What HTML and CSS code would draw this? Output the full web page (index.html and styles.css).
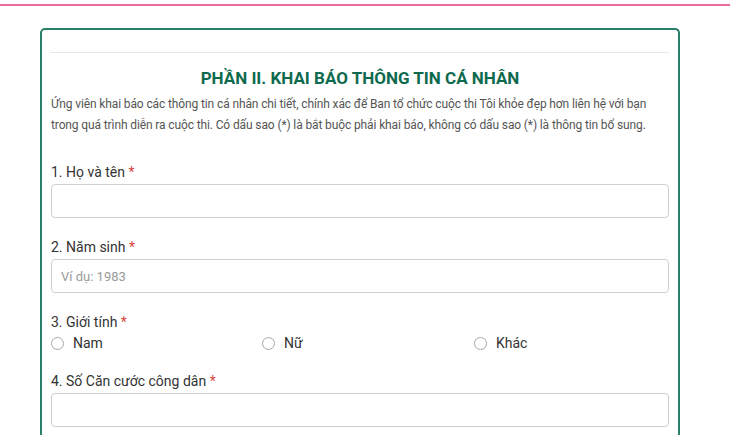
FILE: index.html
```html
<!DOCTYPE html>
<html lang="vi">
<head>
<meta charset="utf-8">
<title>Khai báo thông tin cá nhân</title>
<link rel="stylesheet" href="styles.css">
</head>
<body>
<div class="topline"></div>
<div class="card">
  <hr class="divider">
  <h2 class="title">PHẦN II. KHAI BÁO THÔNG TIN CÁ NHÂN</h2>
  <p class="desc">Ứng viên khai báo các thông tin cá nhân chi tiết, chính xác để Ban tổ chức cuộc thi Tôi khỏe đẹp hơn liên hệ với bạn trong quá trình diễn ra cuộc thi. Có dấu sao (*) là bắt buộc phải khai báo, không có dấu sao (*) là thông tin bổ sung.</p>

  <div class="field">
    <label class="label">1. Họ và tên <span class="req">*</span></label>
    <input class="input" type="text">
  </div>

  <div class="field">
    <label class="label">2. Năm sinh <span class="req">*</span></label>
    <input class="input" type="text" placeholder="Ví dụ: 1983">
  </div>

  <div class="field">
    <label class="label">3. Giới tính <span class="req">*</span></label>
    <div class="radios">
      <label class="radio"><input type="radio" name="gt"><span>Nam</span></label>
      <label class="radio"><input type="radio" name="gt"><span>Nữ</span></label>
      <label class="radio"><input type="radio" name="gt"><span>Khác</span></label>
    </div>
  </div>

  <div class="field">
    <label class="label">4. Số Căn cước công dân <span class="req">*</span></label>
    <input class="input" type="text">
  </div>
</div>
</body>
</html>
```
FILE: styles.css
```css
* { box-sizing: border-box; }
html, body { margin: 0; padding: 0; background: #fff; }
body { font-family: Roboto, "Noto Sans", Arial, sans-serif; color: #333; }

.topline {
  margin-top: 4px;
  height: 2px;
  background: #ec6b9d;
}

.card {
  width: 640px;
  margin: 22px 0 0 40px;
  border: 2px solid #2a7f68;
  border-bottom: none;
  border-radius: 5px 5px 0 0;
  padding: 22px 9px 0 9px;
  height: 420px;
}

.divider {
  margin: 0 0 0 -1px;
  border: 0;
  border-top: 1px solid #e7e7e7;
  height: 0;
}

.title {
  margin: 14px 0 5px;
  text-align: center;
  font-size: 17px;
  line-height: 22px;
  font-weight: 700;
  color: #0d6a4e;
}

.desc {
  margin: 0 0 26px;
  font-size: 12px;
  line-height: 21px;
  letter-spacing: -0.12px;
  color: #555;
}

.field { margin-bottom: 19px; }

.label {
  display: block;
  font-size: 14px;
  line-height: 20px;
  margin-bottom: 2px;
  color: #333;
}

.req { color: #d9463f; }

.input {
  display: block;
  width: 100%;
  height: 34px;
  border: 1px solid #cfcfcf;
  border-radius: 4px;
  padding: 0 9px;
  font-family: inherit;
  font-size: 13px;
  color: #333;
  background: #fff;
}
.input::placeholder { color: #9a9a9a; }

.radios {
  display: grid;
  grid-template-columns: 211px 212px 1fr;
  height: 18px;
}

.radio {
  display: flex;
  align-items: center;
  gap: 9px;
  font-size: 14px;
  line-height: 18px;
  color: #333;
}

.radio input {
  appearance: none;
  -webkit-appearance: none;
  margin: 0;
  width: 13px;
  height: 13px;
  border: 1px solid #a8a8a8;
  border-radius: 50%;
  background: #fff;
}
```
